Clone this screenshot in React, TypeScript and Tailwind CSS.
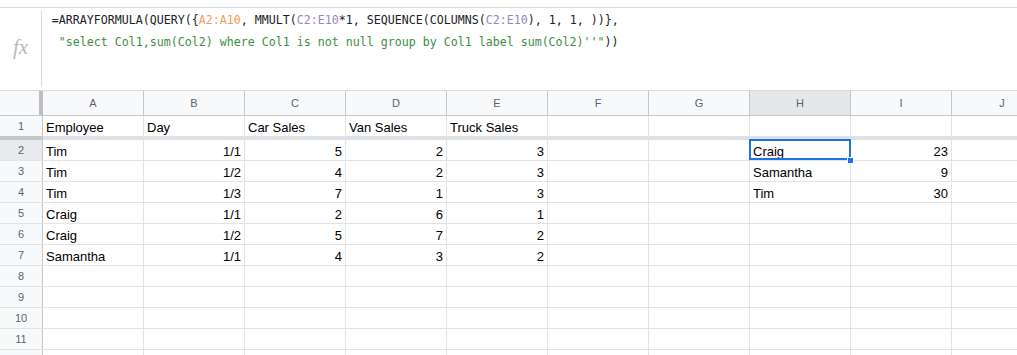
import React from 'react'

const COLS = ['A', 'B', 'C', 'D', 'E', 'F', 'G', 'H', 'I', 'J']

type Val = string | number | null

// row data, columns A..J
const ROWS: Val[][] = [
  ['Employee', 'Day', 'Car Sales', 'Van Sales', 'Truck Sales', null, null, null, null, null],
  ['Tim', '1/1', 5, 2, 3, null, null, 'Craig', 23, null],
  ['Tim', '1/2', 4, 2, 3, null, null, 'Samantha', 9, null],
  ['Tim', '1/3', 7, 1, 3, null, null, 'Tim', 30, null],
  ['Craig', '1/1', 2, 6, 1, null, null, null, null, null],
  ['Craig', '1/2', 5, 7, 2, null, null, null, null, null],
  ['Samantha', '1/1', 4, 3, 2, null, null, null, null, null],
  [], [], [], [], [],
]

const isRight = (v: Val, row: number) => row > 0 && (typeof v === 'number' || (typeof v === 'string' && v.includes('/')))

function FormulaBar() {
  return (
    <div className="h-[84px] border-y border-[#dadce0] flex bg-white mt-[7px]">
      <div className="w-[41px] flex items-center justify-center pb-[2px]">
        <span className="text-[21px] italic text-[#b9b9b9]" style={{ fontFamily: '"Liberation Serif", serif' }}>fx</span>
      </div>
      <div className="w-px bg-[#dadce0] my-[3px]" />
      <div
        className="pl-[11px] pt-[1px] text-[13px] leading-[22px] text-[#202124] whitespace-pre origin-left scale-x-[0.894]"
        style={{ fontFamily: '"DejaVu Sans Mono", monospace' }}
      >
        <div>
          {'=ARRAYFORMULA(QUERY({'}
          <span className="text-[#f29c5e]">{'A2:A10'}</span>
          {', MMULT('}
          <span className="text-[#9a84c6]">{'C2:E10'}</span>
          {'*1, SEQUENCE(COLUMNS('}
          <span className="text-[#9a84c6]">{'C2:E10'}</span>
          {'), 1, 1, ))},'}
        </div>
        <div>
          {' '}
          <span className="text-[#3e8e41]">{`"select Col1,sum(Col2) where Col1 is not null group by Col1 label sum(Col2)''"`}</span>
          {'))'}
        </div>
      </div>
    </div>
  )
}

function HeaderRow() {
  return (
    <div className="flex h-[25px] border-b border-[#c4c7c5] bg-[#f8f9fa] text-[11px] text-[#5f6368]">
      <div className="w-[43px] shrink-0 flex justify-end">
        <div className="w-[4px] h-full bg-[#bdbdbd]" />
      </div>
      {COLS.map(c => (
        <div
          key={c}
          className={`w-[101px] shrink-0 border-r border-[#c4c7c5] flex items-center justify-center ${c === 'H' ? 'bg-[#e5e7ea]' : ''}`}
        >
          {c}
        </div>
      ))}
    </div>
  )
}

function DataRow({ cells, idx, last }: { cells: Val[]; idx: number; last?: boolean }) {
  const rowNum = idx + 1
  return (
    <div className={`flex ${idx === 0 ? 'h-[20px]' : 'h-[21px] border-b border-[#e2e3e3]'}`}>
      <div
        className={`w-[43px] shrink-0 border-r border-[#c4c7c5] flex items-center justify-center text-[11px] text-[#5f6368] ${rowNum === 2 ? 'bg-[#e8eaed]' : 'bg-[#f8f9fa]'}`}
      >
        {!last && rowNum}
      </div>
      {COLS.map((c, ci) => {
        const v = cells[ci] ?? null
        const active = rowNum === 2 && c === 'H'
        return (
          <div
            key={c}
            className={`relative w-[101px] shrink-0 border-r border-[#e2e3e3] flex items-center px-[3px] text-[13px] text-black ${isRight(v, idx) ? 'justify-end' : ''} ${active ? 'z-10' : ''}`}
          >
            {v !== null && <span className="leading-none pt-[2px]">{v}</span>}
            {active && (
              <>
                <div className="absolute -left-px -top-px w-[102px] h-[21px] border-2 border-[#1a73e8]" />
                <div className="absolute right-[-4px] bottom-[-4px] w-[7px] h-[7px] bg-[#1a73e8] border border-white" />
              </>
            )}
          </div>
        )
      })}
    </div>
  )
}

export default function App() {
  return (
    <div className="w-[1017px] h-[355px] overflow-hidden bg-white" style={{ fontFamily: '"Liberation Sans", Arial, sans-serif' }}>
      <FormulaBar />
      <HeaderRow />
      <DataRow cells={ROWS[0]} idx={0} />
      {/* frozen row divider */}
      <div className="flex h-[4px]">
        <div className="w-[43px] shrink-0 bg-[#c4c7c5]" />
        <div className="flex-1 bg-[#dde0e4]" />
      </div>
      {ROWS.slice(1).map((r, i) => (
        <DataRow key={i} cells={r} idx={i + 1} last={i === ROWS.length - 2} />
      ))}
    </div>
  )
}
